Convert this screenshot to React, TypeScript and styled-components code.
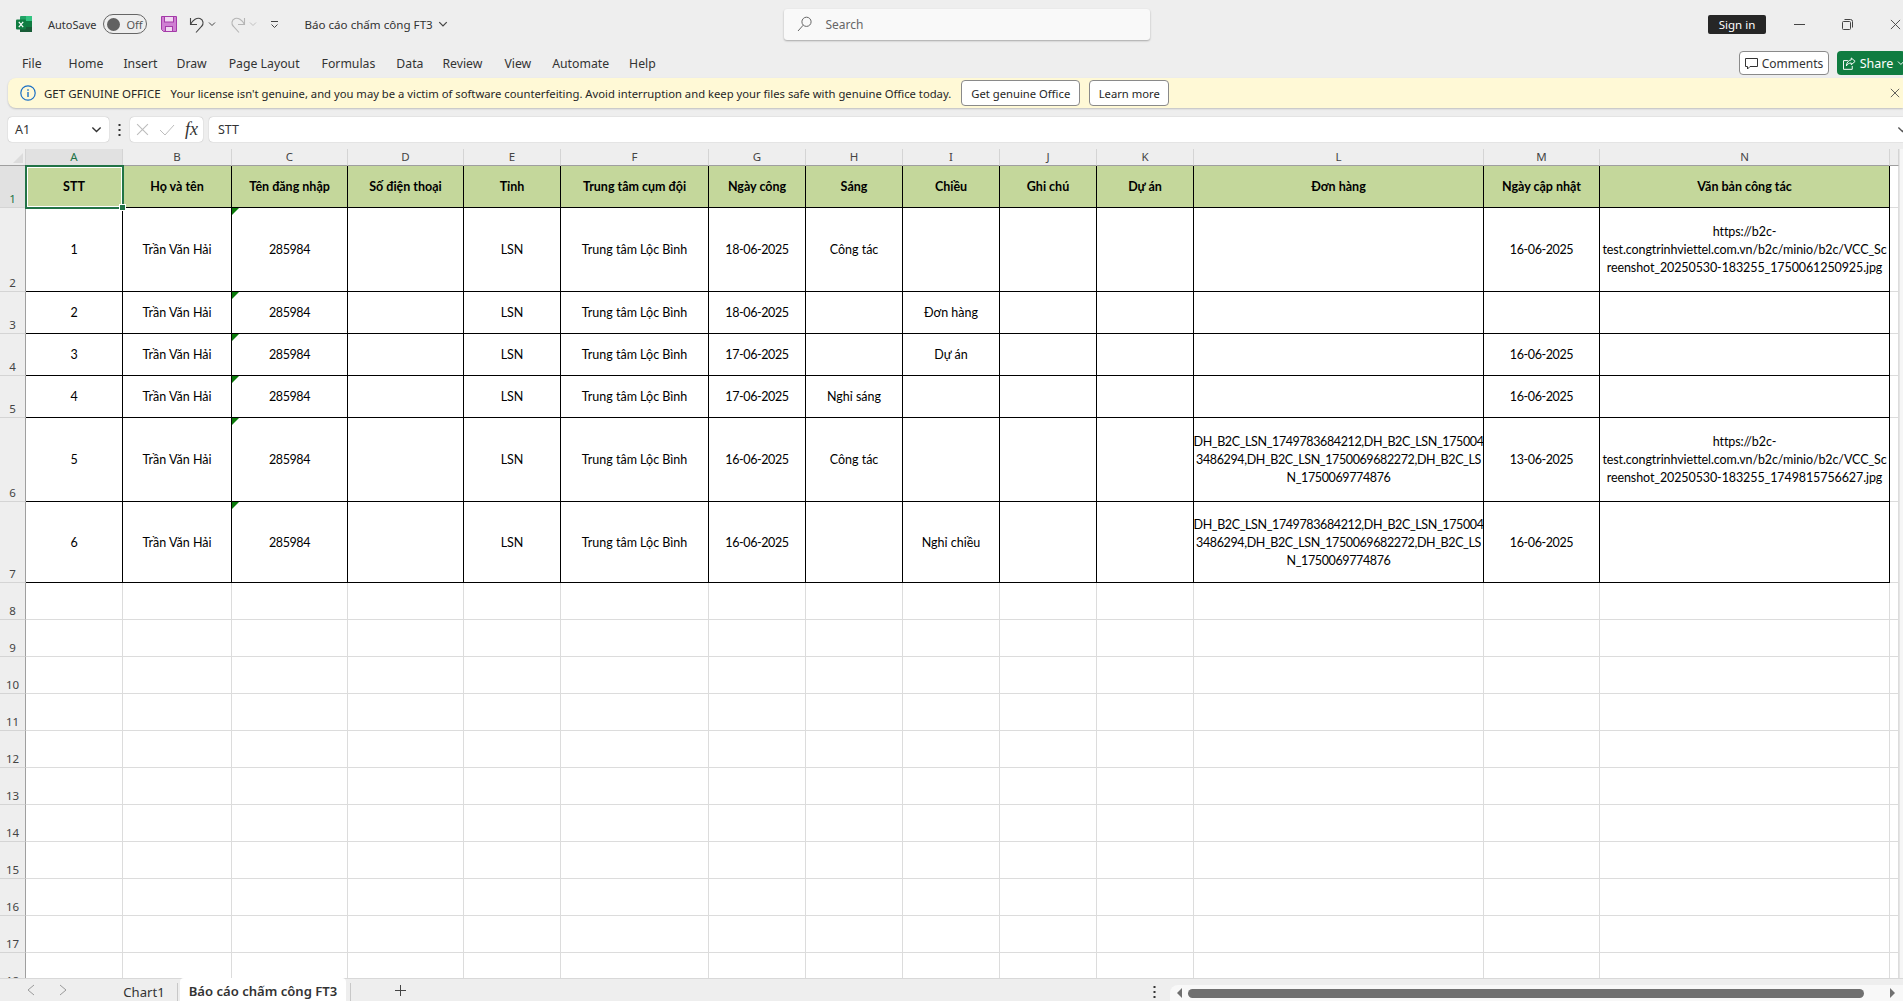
import React from 'react';
import styled, {createGlobalStyle} from 'styled-components';

const GlobalStyle = createGlobalStyle`
    html, body {
        margin: 0;
        padding: 0;
        overflow: hidden;
    }
    body {
        font-family: 'Noto Sans', 'Open Sans', sans-serif;
        color: #262626;
    }
`;

const Page = styled.div`
    width: 1903px;
    height: 1001px;
    display: flex;
    flex-direction: column;
    overflow: hidden;
    background: #eeeeee;
`;

const TitleBar = styled.div`
    height: 48px;
    flex: none;
    display: flex;
    align-items: center;
    padding-left: 16px;
    font-size: 11px;
`;

const Label = styled.span<{$left?: number}>`
    margin-left: ${(p) => p.$left || 0}px;
    white-space: nowrap;
    color: #333333;
`;

const Toggle = styled.div`
    width: 44px;
    height: 20px;
    margin-left: 7px;
    box-sizing: border-box;
    border: 1px solid #666666;
    border-radius: 10px;
    display: flex;
    align-items: center;
    padding-left: 3px;
    gap: 6px;
    font-size: 11px;
    color: #555555;
`;

const Knob = styled.span`
    width: 13px;
    height: 13px;
    border-radius: 50%;
    background: #616161;
`;

const IconSlot = styled.span<{$left?: number}>`
    display: inline-flex;
    margin-left: ${(p) => p.$left || 0}px;
`;

const DocTitle = styled.span`
    margin-left: 25px;
    width: 480px;
    display: flex;
    align-items: center;
    gap: 5px;
    color: #333333;
    font-size: 11.6px;
`;

const SearchBox = styled.div`
    width: 366px;
    height: 31px;
    box-sizing: border-box;
    background: #f9f9f9;
    border-radius: 3px;
    box-shadow: 0 1px 2px rgba(0, 0, 0, 0.3);
    display: flex;
    align-items: center;
    gap: 13px;
    padding-left: 13px;
    color: #666666;
    font-size: 12px;
`;

const SignIn = styled.div`
    margin-left: auto;
    width: 58px;
    height: 19px;
    background: #262626;
    border-radius: 2px;
    color: #ffffff;
    font-size: 11.5px;
    display: flex;
    align-items: center;
    justify-content: center;
`;

const WindowButtons = styled.div`
    display: flex;
    align-items: center;
    gap: 37px;
    margin-left: 28px;
    margin-right: 2px;
`;

const MenuBar = styled.div`
    height: 30px;
    flex: none;
    display: flex;
    align-items: center;
    padding-left: 22px;
    font-size: 12.25px;
    color: #333333;
`;

const MenuItem = styled.span<{$gap: number}>`
    margin-right: ${(p) => p.$gap}px;
    white-space: nowrap;
`;

const MenuRight = styled.div`
    margin-left: auto;
    display: flex;
    gap: 8px;
    margin-right: -2px;
`;

const CommentsButton = styled.div`
    width: 90px;
    height: 24px;
    box-sizing: border-box;
    border: 1px solid #8a8a8a;
    border-radius: 4px;
    background: #ffffff;
    display: flex;
    align-items: center;
    justify-content: center;
    gap: 4px;
    font-size: 12px;
    color: #333333;
`;

const ShareButton = styled.div`
    width: 68px;
    height: 24px;
    box-sizing: border-box;
    border-radius: 4px;
    background: #107c41;
    display: flex;
    align-items: center;
    padding-left: 6px;
    gap: 4px;
    font-size: 12.5px;
    color: #ffffff;
`;

const Banner = styled.div`
    height: 30px;
    flex: none;
    margin-left: 8px;
    display: flex;
    align-items: center;
    padding-left: 12px;
    padding-right: 3px;
    background: #fff9d6;
    border-radius: 8px 0 0 8px;
    box-shadow: 0 1px 2px rgba(0, 0, 0, 0.2);
    font-size: 11.25px;
    color: #262626;
`;

const BannerTitle = styled.span`
    margin-left: 8px;
    white-space: nowrap;
    font-size: 11.5px;
`;

const BannerText = styled.span`
    margin-left: 10px;
    white-space: nowrap;
`;

const BannerButton = styled.div<{$width: number; $left: number}>`
    width: ${(p) => p.$width}px;
    margin-left: ${(p) => p.$left}px;
    height: 26px;
    box-sizing: border-box;
    background: #ffffff;
    border: 1px solid #8a8a8a;
    border-radius: 4px;
    display: flex;
    align-items: center;
    justify-content: center;
    white-space: nowrap;
`;

const BannerClose = styled.span`
    margin-left: auto;
    display: inline-flex;
`;

const FormulaBar = styled.div`
    height: 25px;
    flex: none;
    margin-top: 9px;
    display: flex;
    align-items: stretch;
    padding-left: 8px;
    font-size: 12.5px;
    color: #333333;
`;

const Field = styled.div`
    box-sizing: border-box;
    background: #ffffff;
    border-radius: 4px;
    box-shadow: 0 0 1px rgba(0, 0, 0, 0.4);
    display: flex;
    align-items: center;
`;

const NameBox = styled(Field)`
    width: 101px;
    padding: 0 7px;
    justify-content: space-between;
`;

const Dots = styled.div`
    width: 21px;
    display: flex;
    align-items: center;
    justify-content: center;
`;

const FormulaTools = styled(Field)`
    width: 73px;
    padding: 0 5px 0 6px;
    justify-content: space-between;
`;

const Fx = styled.span`
    font-family: 'Liberation Serif', serif;
    font-style: italic;
    font-size: 18px;
    color: #333333;
`;

const FormulaInput = styled(Field)`
    flex: 1;
    margin-left: 6px;
    padding: 0 0 0 9px;
    border-radius: 4px 0 0 4px;
    justify-content: space-between;
    overflow: hidden;
`;

const FormulaChevron = styled.span`
    display: inline-flex;
    margin-right: -5px;
`;

const SheetArea = styled.div`
    flex: 1;
    min-height: 0;
    margin-top: 7px;
    display: flex;
    overflow: hidden;
`;

const Grid = styled.div`
    display: grid;
    flex: none;
    width: 1899px;
    grid-template-columns: 26px 97px 109px 116px 116px 97px 148px 97px 97px 97px 97px 97px 290px 116px 290px 9px;
    grid-template-rows: 17px 42px 84px 42px 42px 42px 84px 81px repeat(11, 37px);
    background: #ffffff;
`;

const Corner = styled.div`
    background: #eeeeee;
    border-bottom: 1px solid #9f9f9f;
    border-right: 1px solid #d4d4d4;
    box-sizing: border-box;
    position: relative;

    &::after {
        content: '';
        position: absolute;
        right: 2px;
        bottom: 2px;
        border-style: solid;
        border-width: 0 0 10px 10px;
        border-color: transparent transparent #dcdcdc transparent;
    }
`;

const ColumnHead = styled.div<{$active?: boolean}>`
    box-sizing: border-box;
    border-bottom: 1px solid #9f9f9f;
    border-right: 1px solid #d4d4d4;
    background: ${(p) => (p.$active ? '#e1e1e1' : '#eeeeee')};
    color: ${(p) => (p.$active ? '#217346' : '#444444')};
    font-size: 11.5px;
    line-height: 16px;
    text-align: center;
`;

const RowHead = styled.div<{$active?: boolean}>`
    box-sizing: border-box;
    border-bottom: 1px solid #d4d4d4;
    border-right: 1px solid #9f9f9f;
    background: ${(p) => (p.$active ? '#e1e1e1' : '#eeeeee')};
    color: ${(p) => (p.$active ? '#217346' : '#444444')};
    font-size: 11.5px;
    line-height: 16px;
    text-align: center;
    display: flex;
    align-items: flex-end;
    justify-content: center;
`;

const Cell = styled.div<{$head?: boolean; $note?: boolean; $selected?: boolean; $spacing?: number}>`
    box-sizing: border-box;
    position: relative;
    padding-top: 1px;
    border-right: 1px solid #000000;
    border-bottom: 1px solid #000000;
    background: ${(p) => (p.$head ? '#c4d79b' : '#ffffff')};
    font-family: Lato, 'Liberation Sans', sans-serif;
    font-size: 12.5px;
    font-weight: ${(p) => (p.$head ? 700 : 400)};
    letter-spacing: ${(p) => p.$spacing || 0}px;
    line-height: 18px;
    color: #000000;
    white-space: pre-line;
    text-align: center;
    display: flex;
    align-items: center;
    justify-content: center;
    overflow: ${(p) => (p.$selected ? 'visible' : 'hidden')};
    ${(p) => p.$selected && 'z-index: 2;'}

    ${(p) => p.$note && `
        &::before {
            content: '';
            position: absolute;
            top: 0;
            left: 0;
            border-style: solid;
            border-width: 7px 7px 0 0;
            border-color: #0a7a0a transparent transparent transparent;
        }
    `}

    ${(p) => p.$selected && `
        &::before {
            content: '';
            position: absolute;
            top: -1px;
            left: -1px;
            right: -2px;
            bottom: -2px;
            border: 2px solid #217346;
            box-shadow: inset 0 0 0 1px #ffffff;
        }
        &::after {
            content: '';
            position: absolute;
            right: -4px;
            bottom: -4px;
            width: 5px;
            height: 5px;
            background: #217346;
            border: 1px solid #ffffff;
        }
    `}
`;

const EmptyCell = styled.div`
    box-sizing: border-box;
    border-right: 1px solid #dcdcdc;
    border-bottom: 1px solid #dcdcdc;
    background: #ffffff;
`;

const SideStrip = styled.div`
    flex: 1;
    background: #f6f6f6;
    border-left: 1px solid #e4e4e4;
`;

const TabBar = styled.div`
    height: 23px;
    flex: none;
    display: flex;
    align-items: stretch;
    border-top: 1px solid #d8d8d8;
    box-sizing: border-box;
    font-size: 13.1px;
    color: #333333;
`;

const TabNav = styled.div`
    width: 103px;
    display: flex;
    align-items: center;
    gap: 24px;
    padding-left: 27px;
    box-sizing: border-box;
`;

const Tab = styled.div<{$active?: boolean; $width: number}>`
    width: ${(p) => p.$width}px;
    box-sizing: border-box;
    display: flex;
    align-items: center;
    justify-content: center;
    white-space: nowrap;
    background: ${(p) => (p.$active ? '#ffffff' : 'transparent')};
    border-radius: ${(p) => (p.$active ? '4px 4px 0 0' : '0')};
    font-weight: ${(p) => (p.$active ? 600 : 400)};
    margin-top: ${(p) => (p.$active ? '-1px' : '0')};
    padding-top: ${(p) => (p.$active ? '2px' : '3px')};
    padding-left: ${(p) => (p.$active ? '0' : '10px')};
`;

const TabDivider = styled.div<{$left: number}>`
    width: 1px;
    margin: 4px ${(p) => p.$left}px 0;
    background: #c8c8c8;
`;

const AddTab = styled.div`
    width: 798px;
    display: flex;
    align-items: center;
    padding-left: 40px;
    box-sizing: border-box;
`;

const TabDots = styled.div`
    width: 17px;
    display: flex;
    align-items: flex-end;
    justify-content: flex-start;
    padding-bottom: 3px;
    box-sizing: border-box;
`;

const HScroll = styled.div`
    flex: 1;
    align-self: flex-end;
    height: 16px;
    background: #f8f8f8;
    border-radius: 8px 0 0 0;
    display: flex;
    align-items: center;
    padding: 0 8px 0 7px;
    gap: 6px;
`;

const HThumb = styled.div`
    width: 676px;
    height: 9px;
    background: #707070;
    border-radius: 5px;
`;

const ArrowLeft = styled.span`
    border-style: solid;
    border-width: 5px 5px 5px 0;
    border-color: transparent #707070 transparent transparent;
`;

const ArrowRight = styled.span`
    margin-left: auto;
    border-style: solid;
    border-width: 5px 0 5px 5px;
    border-color: transparent transparent transparent #707070;
`;

const columns = ['A', 'B', 'C', 'D', 'E', 'F', 'G', 'H', 'I', 'J', 'K', 'L', 'M', 'N', ''];

const headers = ['STT', 'Họ và tên', 'Tên đăng nhập', 'Số điện thoại', 'Tỉnh', 'Trung tâm cụm đội', 'Ngày công', 'Sáng', 'Chiều', 'Ghi chú', 'Dự án', 'Đơn hàng', 'Ngày cập nhật', 'Văn bản công tác'];

const orders = 'DH_B2C_LSN_1749783684212,DH_B2C_LSN_175004\n3486294,DH_B2C_LSN_1750069682272,DH_B2C_LS\nN_1750069774876';
const link1 = 'https://b2c-\ntest.congtrinhviettel.com.vn/b2c/minio/b2c/VCC_Sc\nreenshot_20250530-183255_1750061250925.jpg';
const link2 = 'https://b2c-\ntest.congtrinhviettel.com.vn/b2c/minio/b2c/VCC_Sc\nreenshot_20250530-183255_1749815756627.jpg';

const person = ['Trần Văn Hải', '285984', '', 'LSN', 'Trung tâm Lộc Bình'];

const dataRows = [
    ['1', ...person, '18-06-2025', 'Công tác', '', '', '', '', '16-06-2025', link1],
    ['2', ...person, '18-06-2025', '', 'Đơn hàng', '', '', '', '', ''],
    ['3', ...person, '17-06-2025', '', 'Dự án', '', '', '', '16-06-2025', ''],
    ['4', ...person, '17-06-2025', 'Nghỉ sáng', '', '', '', '', '16-06-2025', ''],
    ['5', ...person, '16-06-2025', 'Công tác', '', '', '', orders, '13-06-2025', link2],
    ['6', ...person, '16-06-2025', '', 'Nghỉ chiều', '', '', orders, '16-06-2025', ''],
];

const emptyRows = [8, 9, 10, 11, 12, 13, 14, 15, 16, 17, 18];

const menus: [string, number][] = [
    ['File', 27], ['Home', 20], ['Insert', 19], ['Draw', 22], ['Page Layout', 22], ['Formulas', 21],
    ['Data', 19], ['Review', 22], ['View', 21], ['Automate', 20], ['Help', 0],
];

// Lato digits run wider than the sheet font, so the number-heavy cells get tightened
const spacingFor = (v: string) => {
    if (v.startsWith('DH_')) {
        return -0.38;
    }
    if (v.startsWith('https')) {
        return -0.1;
    }
    if ((/^\d[\d-]+$/).test(v)) {
        return -0.4;
    }
    return 0;
};

const ExcelIcon = () => (
    <svg width='16' height='16' viewBox='0 0 16 16'>
        <rect x='4' y='0' width='12' height='16' rx='1' fill='#21a366'/>
        <rect x='10' y='0' width='6' height='5' fill='#33c481'/>
        <rect x='4' y='5' width='12' height='6' fill='#107c41'/>
        <rect x='10' y='11' width='6' height='5' fill='#185c37'/>
        <rect x='4' y='11' width='6' height='5' fill='#185c37'/>
        <rect x='0' y='3.5' width='10' height='10' rx='1' fill='#107c41'/>
        <path d='M2.8 5.8l4.4 5.4M7.2 5.8l-4.4 5.4' stroke='#ffffff' strokeWidth='1.2'/>
    </svg>
);

const SaveIcon = () => (
    <svg width='16' height='16' viewBox='0 0 16 16'>
        <path d='M.5.5h15v15H2.5l-2-2z' fill='#cf7fd2' stroke='#a43ba8'/>
        <rect x='3.5' y='.5' width='9' height='5.5' fill='#f1d8f2' stroke='#a43ba8'/>
        <rect x='4.5' y='10.5' width='7' height='5' fill='#f1d8f2' stroke='#a43ba8'/>
    </svg>
);

const UndoIcon = ({color}: {color: string}) => (
    <svg width='16' height='17' viewBox='0 0 16 17' fill='none' stroke={color} strokeWidth='1.1'>
        <path d='M1.5 2v6.5H8M1.5 8.5C4 3.5 8 1.5 11 2.5c3.5 1.5 4 5.5 1.5 8L7 16.5'/>
    </svg>
);

const RedoIcon = ({color}: {color: string}) => (
    <svg width='16' height='17' viewBox='0 0 16 17' fill='none' stroke={color} strokeWidth='1.1'>
        <path d='M14.5 2v6.5H8M14.5 8.5C12 3.5 8 1.5 5 2.5c-3.5 1.5-4 5.5-1.5 8L9 16.5'/>
    </svg>
);

const Chevron = ({color = '#444444', size = 8}: {color?: string; size?: number}) => (
    <svg width={size} height={size} viewBox='0 0 8 8' fill='none' stroke={color} strokeWidth='1'>
        <path d='M1 2.5l3 3 3-3'/>
    </svg>
);

const CustomizeIcon = () => (
    <svg width='9' height='9' viewBox='0 0 9 9' fill='none' stroke='#444444'>
        <path d='M1 1.5h7M1.5 4.5l3 3 3-3'/>
    </svg>
);

const SearchIcon = () => (
    <svg width='15' height='16' viewBox='0 0 15 16' fill='none' stroke='#666666'>
        <circle cx='9.5' cy='5.8' r='4.6'/>
        <path d='M6.2 9.2L1 15'/>
    </svg>
);

const Cross = ({size, color = '#444444'}: {size: number; color?: string}) => (
    <svg width={size} height={size} viewBox='0 0 12 12' fill='none' stroke={color}>
        <path d='M1 1l10 10M11 1L1 11'/>
    </svg>
);

const MinimizeIcon = () => (
    <svg width='11' height='11' viewBox='0 0 11 11' stroke='#444444'>
        <path d='M0 5.5h11'/>
    </svg>
);

const RestoreIcon = () => (
    <svg width='11' height='11' viewBox='0 0 11 11' fill='none' stroke='#444444'>
        <rect x='.5' y='2.5' width='8' height='8' rx='1'/>
        <path d='M2.5.5h6a2 2 0 0 1 2 2v6'/>
    </svg>
);

const CommentIcon = () => (
    <svg width='13' height='13' viewBox='0 0 13 13' fill='none' stroke='#333333'>
        <path d='M.5 1.5h12v8H5L2.5 12V9.5h-2z'/>
    </svg>
);

const ShareIcon = () => (
    <svg width='13' height='13' viewBox='0 0 13 13' fill='none' stroke='#ffffff'>
        <path d='M5 3.5H.5v9h9V9M8.5.8l4 3.5-4 3.5V6C6 6 4.5 7 3.5 9 3.5 6 5.5 3 8.5 2.8z'/>
    </svg>
);

const InfoIcon = () => (
    <svg width='16' height='16' viewBox='0 0 16 16' fill='none'>
        <circle cx='8' cy='8' r='7.2' stroke='#1a6fc4' strokeWidth='1.2'/>
        <rect x='7.3' y='7' width='1.4' height='5' fill='#1a6fc4'/>
        <rect x='7.3' y='4.2' width='1.4' height='1.6' fill='#1a6fc4'/>
    </svg>
);

const CheckIcon = () => (
    <svg width='16' height='12' viewBox='0 0 16 12' fill='none' stroke='#bdbdbd'>
        <path d='M1 6l5 5L15 1'/>
    </svg>
);

const VerticalDots = () => (
    <svg width='3' height='12' viewBox='0 0 3 12' fill='#333333'>
        <rect x='.5' y='0' width='2' height='2'/>
        <rect x='.5' y='5' width='2' height='2'/>
        <rect x='.5' y='10' width='2' height='2'/>
    </svg>
);

const NavArrow = ({flip}: {flip?: boolean}) => (
    <svg width='8' height='12' viewBox='0 0 8 12' fill='none' stroke='#9a9a9a'>
        <path d={flip ? 'M1 1l6 5-6 5' : 'M7 1L1 6l6 5'}/>
    </svg>
);

const PlusIcon = () => (
    <svg width='11' height='11' viewBox='0 0 11 11' stroke='#444444'>
        <path d='M5.5 0v11M0 5.5h11'/>
    </svg>
);

export default function App() {
    return (
        <Page>
            <GlobalStyle/>
            <TitleBar>
                <ExcelIcon/>
                <Label $left={16}>{'AutoSave'}</Label>
                <Toggle>
                    <Knob/>
                    {'Off'}
                </Toggle>
                <IconSlot $left={14}><SaveIcon/></IconSlot>
                <IconSlot $left={12}><UndoIcon color='#444444'/></IconSlot>
                <IconSlot $left={3}><Chevron/></IconSlot>
                <IconSlot $left={14}><RedoIcon color='#b5b5b5'/></IconSlot>
                <IconSlot $left={3}><Chevron color='#c0c0c0'/></IconSlot>
                <IconSlot $left={13}><CustomizeIcon/></IconSlot>
                <DocTitle>
                    {'Báo cáo chấm công FT3'}
                    <Chevron size={10}/>
                </DocTitle>
                <SearchBox>
                    <SearchIcon/>
                    {'Search'}
                </SearchBox>
                <SignIn>{'Sign in'}</SignIn>
                <WindowButtons>
                    <MinimizeIcon/>
                    <RestoreIcon/>
                    <Cross size={11}/>
                </WindowButtons>
            </TitleBar>
            <MenuBar>
                {menus.map(([name, gap]) => (
                    <MenuItem
                        key={name}
                        $gap={gap}
                    >
                        {name}
                    </MenuItem>
                ))}
                <MenuRight>
                    <CommentsButton>
                        <CommentIcon/>
                        {'Comments'}
                    </CommentsButton>
                    <ShareButton>
                        <ShareIcon/>
                        {'Share'}
                        <Chevron color='#ffffff'/>
                    </ShareButton>
                </MenuRight>
            </MenuBar>
            <Banner>
                <InfoIcon/>
                <BannerTitle>{'GET GENUINE OFFICE'}</BannerTitle>
                <BannerText>{"Your license isn't genuine, and you may be a victim of software counterfeiting. Avoid interruption and keep your files safe with genuine Office today."}</BannerText>
                <BannerButton
                    $width={119}
                    $left={10}
                >
                    {'Get genuine Office'}
                </BannerButton>
                <BannerButton
                    $width={80}
                    $left={9}
                >
                    {'Learn more'}
                </BannerButton>
                <BannerClose><Cross size={10}/></BannerClose>
            </Banner>
            <FormulaBar>
                <NameBox>
                    {'A1'}
                    <Chevron
                        size={11}
                        color='#333333'
                    />
                </NameBox>
                <Dots><VerticalDots/></Dots>
                <FormulaTools>
                    <Cross
                        size={13}
                        color='#bdbdbd'
                    />
                    <CheckIcon/>
                    <Fx>{'fx'}</Fx>
                </FormulaTools>
                <FormulaInput>
                    {'STT'}
                    <FormulaChevron>
                        <Chevron
                            size={11}
                            color='#555555'
                        />
                    </FormulaChevron>
                </FormulaInput>
            </FormulaBar>
            <SheetArea>
                <Grid>
                    <Corner/>
                    {columns.map((c, i) => (
                        <ColumnHead
                            key={`col-${i}`}
                            $active={c === 'A'}
                        >
                            {c}
                        </ColumnHead>
                    ))}

                    <RowHead $active={true}>{'1'}</RowHead>
                    {headers.map((h, i) => (
                        <Cell
                            key={h}
                            $head={true}
                            $selected={i === 0}
                        >
                            {h}
                        </Cell>
                    ))}
                    <EmptyCell/>

                    {dataRows.map((row, r) => (
                        <React.Fragment key={`row-${r}`}>
                            <RowHead>{r + 2}</RowHead>
                            {row.map((v, i) => (
                                <Cell
                                    key={`cell-${r}-${i}`}
                                    $note={i === 2}
                                    $spacing={spacingFor(v)}
                                >
                                    {v}
                                </Cell>
                            ))}
                            <EmptyCell/>
                        </React.Fragment>
                    ))}

                    {emptyRows.map((n) => (
                        <React.Fragment key={`empty-${n}`}>
                            <RowHead>{n}</RowHead>
                            {columns.map((c, i) => (
                                <EmptyCell key={`empty-${n}-${i}`}/>
                            ))}
                        </React.Fragment>
                    ))}
                </Grid>
                <SideStrip/>
            </SheetArea>
            <TabBar>
                <TabNav>
                    <NavArrow/>
                    <NavArrow flip={true}/>
                </TabNav>
                <Tab $width={72}>{'Chart1'}</Tab>
                <TabDivider $left={2}/>
                <Tab
                    $active={true}
                    $width={166}
                >
                    {'Báo cáo chấm công FT3'}
                </Tab>
                <TabDivider $left={4}/>
                <AddTab><PlusIcon/></AddTab>
                <TabDots><VerticalDots/></TabDots>
                <HScroll>
                    <ArrowLeft/>
                    <HThumb/>
                    <ArrowRight/>
                </HScroll>
            </TabBar>
        </Page>
    );
}
